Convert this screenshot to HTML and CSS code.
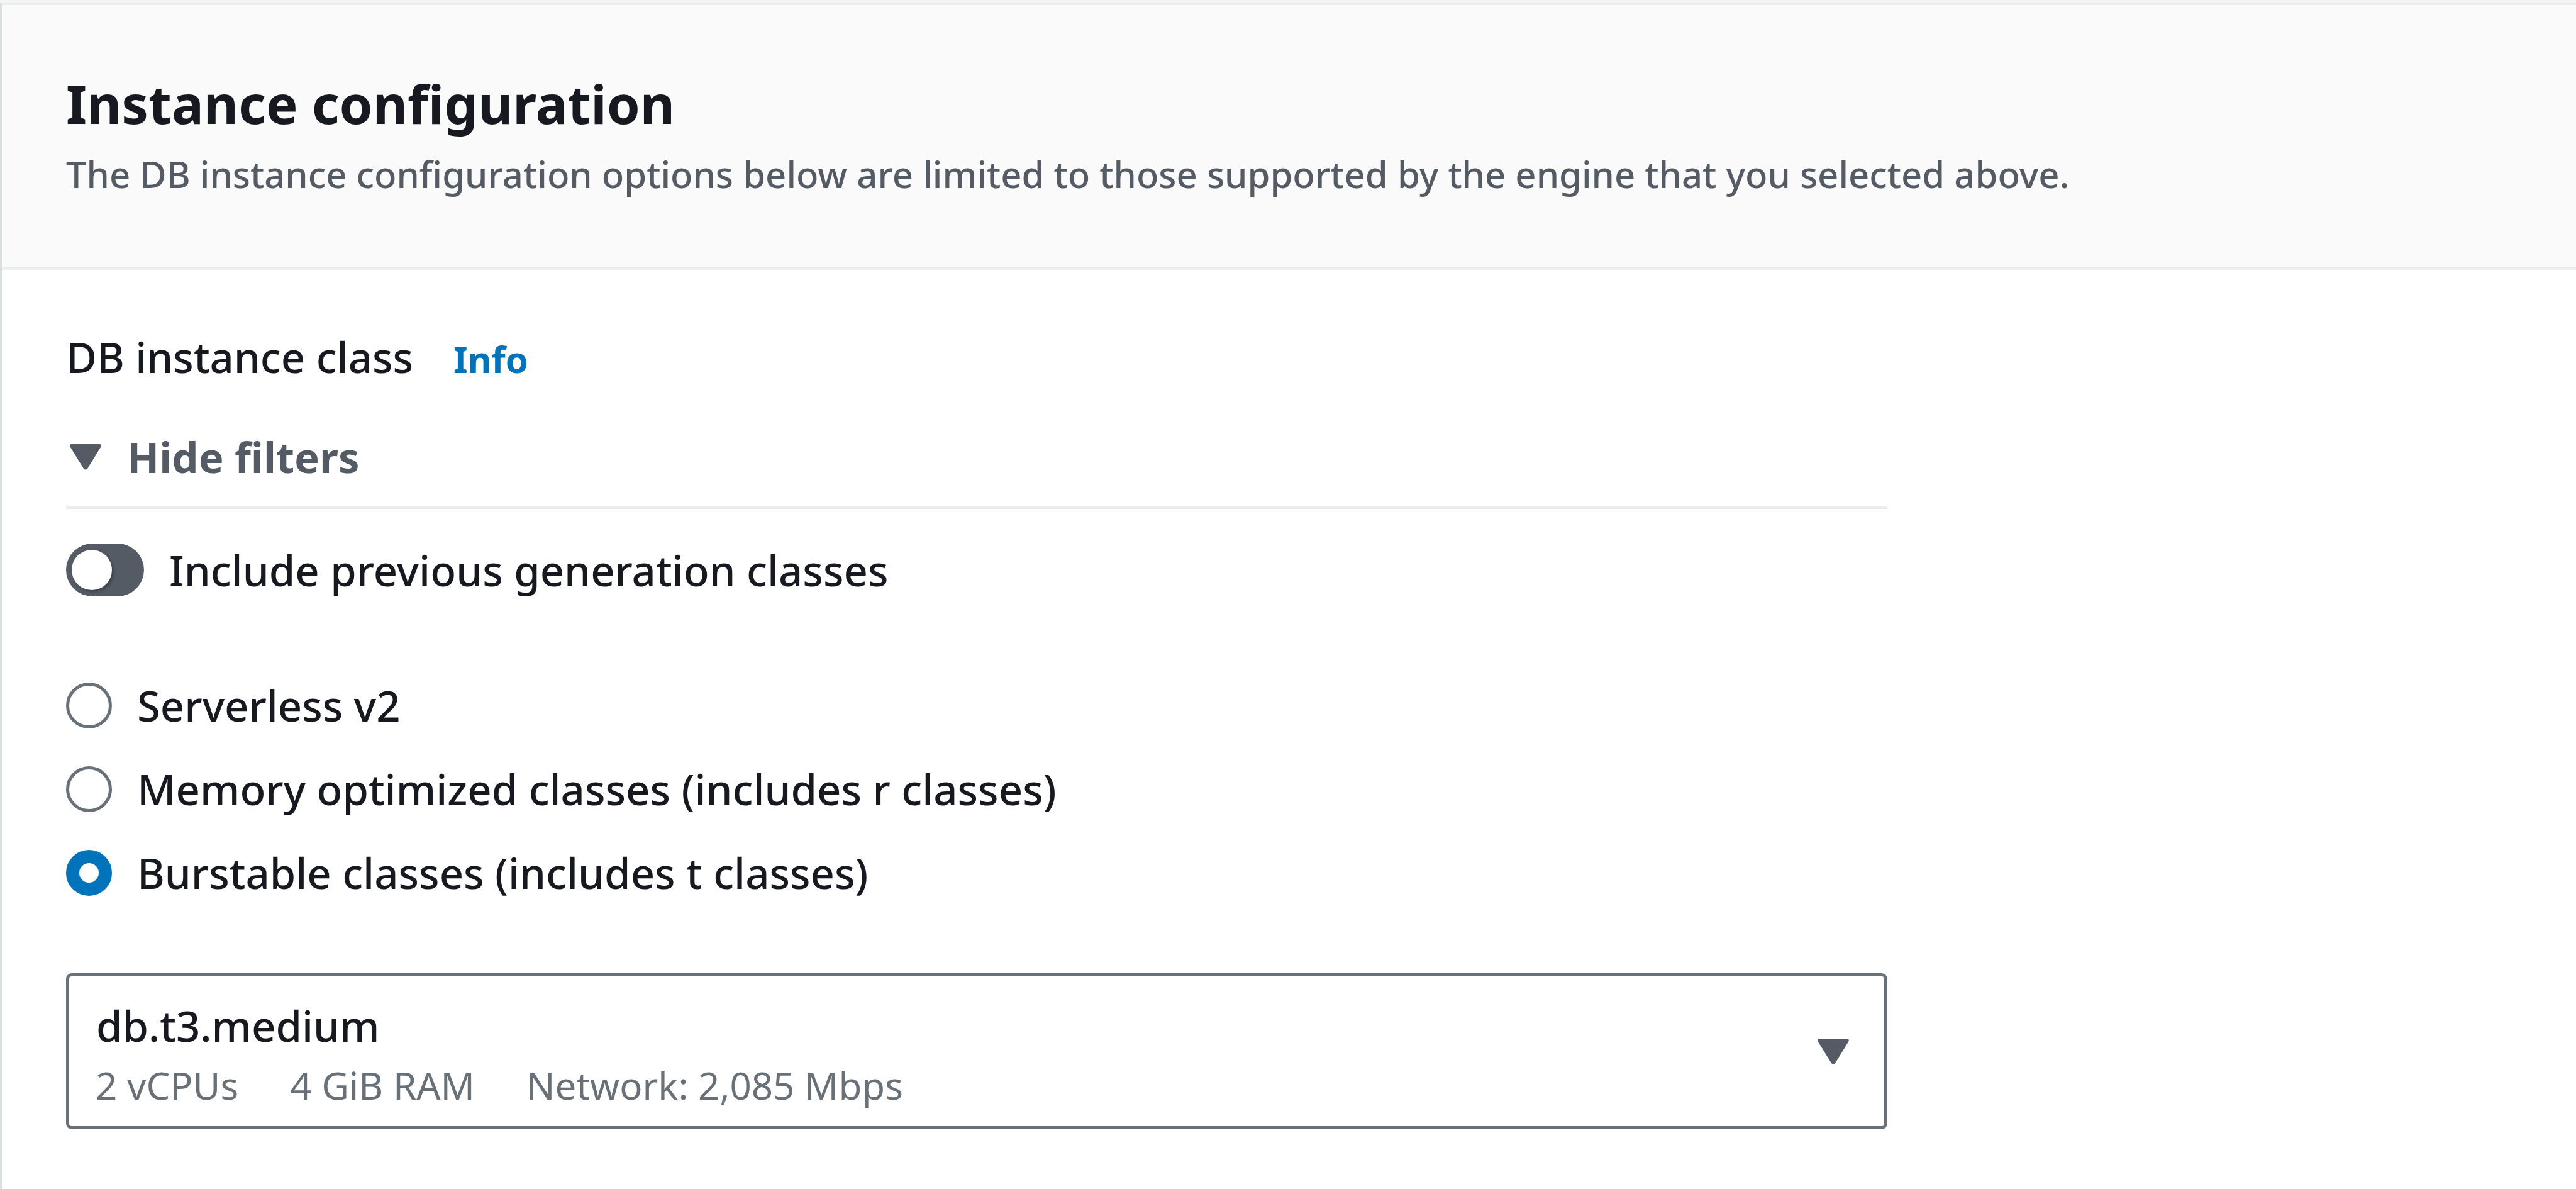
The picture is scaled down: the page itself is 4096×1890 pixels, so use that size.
FILE: index.html
```html
<!DOCTYPE html>
<html lang="en">
<head>
<meta charset="utf-8">
<meta name="viewport" content="width=device-width, initial-scale=1">
<title>Instance configuration</title>
<link rel="stylesheet" href="styles.css">
</head>
<body>
<main class="page">
  <section class="panel">
    <header class="panel-header">
      <h2 class="panel-title">Instance configuration</h2>
      <p class="panel-description">The DB instance configuration options below are limited to those supported by the engine that you selected above.</p>
    </header>
    <form class="panel-body">
      <div class="field-head">
        <label for="instance-class">DB instance class</label>
        <a class="info-link" href="#info">Info</a>
      </div>

      <div class="filters-head">
        <button class="filters-toggle" type="button" aria-expanded="true">
          <svg class="caret" viewBox="0 0 52 42" aria-hidden="true"><path d="M3 1H49Q52 3 50 6L29 40Q26 43 23 40L2 6Q0 2 3 1Z"/></svg>
          Hide filters
        </button>
      </div>

      <label class="switch-row">
        <input class="switch" type="checkbox" role="switch">
        Include previous generation classes
      </label>

      <div class="radio-group" role="radiogroup" aria-label="Instance class family">
        <label class="radio-row"><input class="radio" type="radio" name="family">Serverless v2</label>
        <label class="radio-row"><input class="radio" type="radio" name="family">Memory optimized classes (includes r classes)</label>
        <label class="radio-row"><input class="radio" type="radio" name="family" checked>Burstable classes (includes t classes)</label>
      </div>

      <div class="select-box">
        <select class="select" id="instance-class" aria-describedby="instance-specs">
          <option>db.t3.medium</option>
        </select>
        <div class="select-specs" id="instance-specs">
          <span>2 vCPUs</span>
          <span>4 GiB RAM</span>
          <span>Network: 2,085 Mbps</span>
        </div>
        <svg class="caret select-caret" viewBox="0 0 52 42" aria-hidden="true"><path d="M3 1H49Q52 3 50 6L29 40Q26 43 23 40L2 6Q0 2 3 1Z"/></svg>
      </div>
    </form>
  </section>
</main>
</body>
</html>
```
FILE: styles.css
```css
*,
*::before,
*::after {
  box-sizing: border-box;
}

body {
  margin: 0;
  background: #f2f3f3;
  color: #16191f;
  font: 500 67px/92px "Noto Sans", "Open Sans", sans-serif;
}

.page {
  display: flex;
  flex-direction: column;
  min-height: 100vh;
  padding-top: 4px;
}

.panel {
  display: flex;
  flex: 1;
  flex-direction: column;
  border-top: 4px solid #eaeded;
  border-left: 3px solid #d9dede;
  background: #ffffff;
}

.panel-header {
  padding: 100px 102px 107px;
  border-bottom: 5px solid #eaeded;
  background: #fafafa;
}

.panel-title {
  margin: 0 0 17px;
  font-size: 85px;
  font-weight: 700;
  line-height: 112px;
}

.panel-description {
  margin: 0;
  color: #545b64;
  font-size: 58px;
  line-height: 80px;
}

.panel-body {
  padding: 92px 130px 94px 102px;
}

.field-head {
  display: flex;
  align-items: baseline;
  gap: 64px;
}

.info-link {
  color: #0073bb;
  font-size: 58px;
  font-weight: 700;
  line-height: 80px;
  text-decoration: none;
}

.filters-head {
  width: 75%;
  margin-top: 67px;
  padding-bottom: 32px;
  border-bottom: 5px solid #eaeded;
}

.filters-toggle {
  display: flex;
  align-items: center;
  gap: 40px;
  padding: 0 0 0 5px;
  border: 0;
  background: none;
  color: #545b64;
  font: inherit;
  font-weight: 700;
}

.caret {
  width: 52px;
  height: 42px;
  fill: #545b64;
}

.switch-row {
  display: flex;
  align-items: center;
  gap: 40px;
  margin-top: 51px;
}

.switch {
  display: flex;
  align-items: center;
  width: 124px;
  height: 84px;
  margin: 0;
  padding: 0 9px;
  border-radius: 42px;
  background: #545b64;
  appearance: none;
}

.switch::before {
  width: 64px;
  height: 64px;
  border-radius: 50%;
  background: #ffffff;
  box-shadow: 3px 3px 4px rgba(0, 0, 0, 0.25);
  content: "";
}

.switch:checked {
  justify-content: flex-end;
  background: #0073bb;
}

.radio-group {
  display: grid;
  gap: 41px;
  margin-top: 123px;
}

.radio-row {
  display: flex;
  align-items: center;
  gap: 40px;
}

.radio {
  width: 73px;
  height: 73px;
  margin: 0;
  border: 5px solid #687078;
  border-radius: 50%;
  background: #ffffff;
  appearance: none;
}

.radio:checked {
  border: 21px solid #0073bb;
}

.select-box {
  display: grid;
  width: 75%;
  margin-top: 114px;
}

.select,
.select-specs,
.select-caret {
  grid-area: 1 / 1;
}

.select {
  width: 100%;
  padding: 32px 160px 114px 43px;
  border: 5px solid #687078;
  border-radius: 9px;
  background: #ffffff;
  color: inherit;
  font: inherit;
  appearance: none;
}

.select-specs {
  display: flex;
  align-self: end;
  gap: 82px;
  padding: 0 0 30px 47px;
  color: #687078;
  font-size: 60px;
  font-weight: 400;
  line-height: 80px;
  pointer-events: none;
}

.select-caret {
  align-self: center;
  justify-self: end;
  margin-right: 60px;
  pointer-events: none;
}
```
